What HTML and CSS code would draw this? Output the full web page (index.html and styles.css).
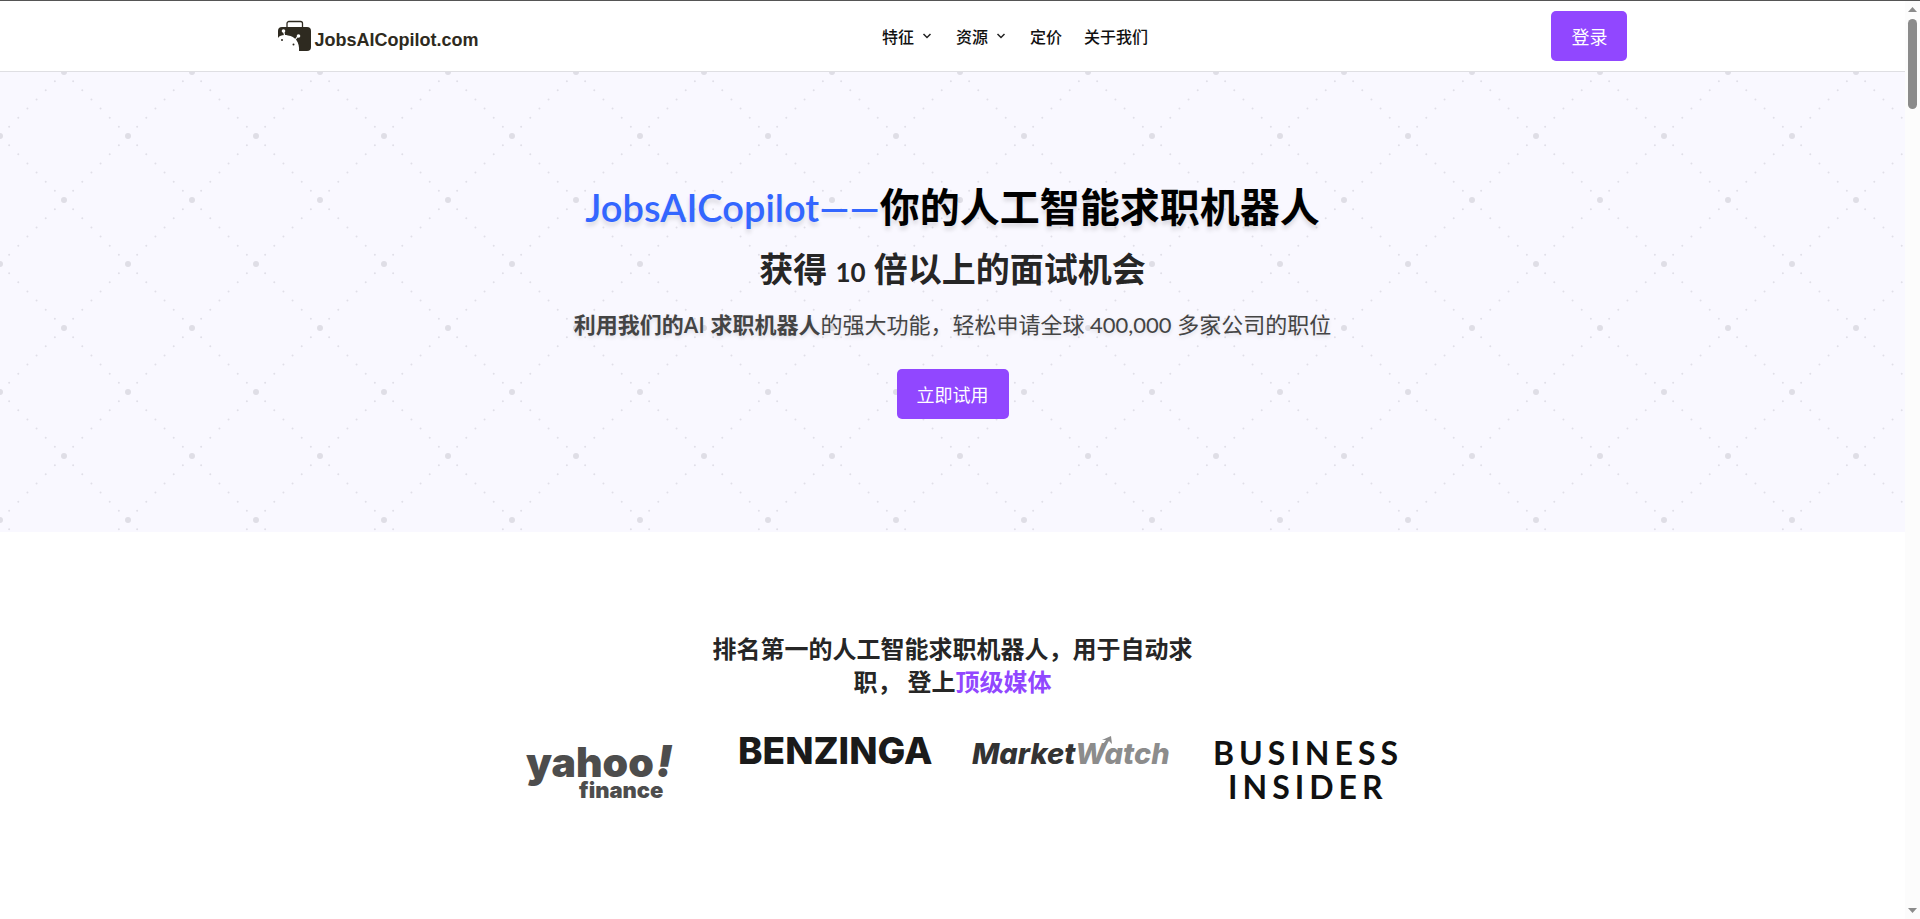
FILE: index.html
```html
<!DOCTYPE html>
<html lang="zh-CN">
<head>
    <meta charset="UTF-8">
    <meta name="viewport" content="width=device-width, initial-scale=1.0">
    <title>JobsAICopilot.com</title>
    <link rel="stylesheet" href="styles.css">
</head>
<body>
    <header class="site-header">
        <div class="header-inner">
            <a class="brand" href="#">
                <svg class="brand-icon" width="34" height="32" viewBox="0 0 34 32" aria-hidden="true">
                    <path d="M9 7V3.500a2 2 0 0 1 2-2h11.500a2 2 0 0 1 2 2V7" fill="none" stroke="#2e2a20" stroke-width="1.300"/>
                    <rect x="0" y="7" width="33" height="24" rx="4" fill="#2e2a20"/>
                    <path d="M0 18c2-3 6-3.500 10-2.500C17 16.500 22 22 21 31.500H0z" fill="#fff"/>
                    <path d="M7 17L5.500 11M17 20l3-4" stroke="#fff" stroke-width="1.200"/>
                    <circle cx="5.500" cy="11" r="1.800" fill="#fff"/>
                    <circle cx="20.500" cy="16" r="1.800" fill="#fff"/>
                    <circle cx="4" cy="20" r="1" fill="#2e2a20"/>
                    <circle cx="15.500" cy="24.500" r="1" fill="#2e2a20"/>
                </svg>
                <span class="brand-name">JobsAICopilot.com</span>
            </a>
            <nav class="main-nav">
                <a href="#">特征
                    <svg class="chevron" width="20" height="8" viewBox="0 0 20 8" aria-hidden="true"><path d="M9.500 2l3.500 3.500L16.500 2"/></svg>
                </a>
                <a href="#">资源
                    <svg class="chevron" width="20" height="8" viewBox="0 0 20 8" aria-hidden="true"><path d="M9.500 2l3.500 3.500L16.500 2"/></svg>
                </a>
                <a href="#">定价</a>
                <a href="#">关于我们</a>
            </nav>
            <button class="btn" type="button">登录</button>
        </div>
    </header>

    <main>
        <section class="hero">
            <svg class="hero-pattern" width="100%" height="100%" aria-hidden="true">
                <defs>
                    <pattern id="dots" width="128" height="128" patternUnits="userSpaceOnUse">
                        <g fill="none" stroke="#e0dfe8" stroke-width="2" stroke-linecap="round" stroke-dasharray="0 12.930">
                            <path d="M64 0L128 64"/>
                            <path d="M64 0L0 64"/>
                            <path d="M64 128L128 64"/>
                            <path d="M64 128L0 64"/>
                        </g>
                        <g fill="#dfdee6">
                            <circle cx="64" cy="0" r="3"/>
                            <circle cx="64" cy="128" r="3"/>
                            <circle cx="0" cy="64" r="3"/>
                            <circle cx="128" cy="64" r="3"/>
                        </g>
                    </pattern>
                </defs>
                <rect width="100%" height="100%" fill="url(#dots)"/>
            </svg>
            <div class="hero-content">
                <h1><span class="hero-brand">JobsAICopilot——</span>你的人工智能求职机器人</h1>
                <h2>获得 <span class="hero-number">10</span> 倍以上的面试机会</h2>
                <p><strong>利用我们的<span class="hero-ai">AI</span> 求职机器人</strong>的强大功能，轻松申请全球 400,000 多家公司的职位</p>
                <button class="btn" type="button">立即试用</button>
            </div>
        </section>

        <section class="media">
            <h3>排名第一的人工智能求职机器人，用于自动求职， 登上<span class="accent">顶级媒体</span></h3>
            <div class="media-logos">
                <svg width="196" height="72" viewBox="0 0 196 72" role="img" aria-label="yahoo! finance">
                    <g class="logo-heavy" fill="#4d4d4d" font-weight="900">
                        <text x="24" y="41" font-size="41">yahoo</text>
                        <text x="154" y="41" font-size="44" font-style="italic">!</text>
                        <text x="77" y="62" font-size="22">finance</text>
                    </g>
                </svg>
                <svg width="196" height="72" viewBox="0 0 196 72" role="img" aria-label="Benzinga">
                    <text class="logo-heavy" x="1" y="28" font-size="37" font-weight="800" fill="#1a1a1a">BENZINGA</text>
                </svg>
                <svg width="196" height="72" viewBox="0 0 196 72" role="img" aria-label="MarketWatch">
                    <text class="logo-heavy" x="0" y="28" font-size="29" font-weight="800" font-style="italic" fill="#333">Market<tspan fill="#8c8c8c">Watch</tspan></text>
                    <path d="M129 11L134 4l-4 0 9-4 1 8-3-3-5 7z" fill="#8c8c8c"/>
                </svg>
                <svg width="196" height="72" viewBox="0 0 196 72" role="img" aria-label="Business Insider">
                    <g class="logo-wide" fill="#111" font-size="32" font-weight="700">
                        <text x="6" y="29">BUSINESS</text>
                        <text x="21" y="63">INSIDER</text>
                    </g>
                </svg>
            </div>
        </section>
    </main>

    <div class="scrollbar" aria-hidden="true">
        <svg width="9" height="5" viewBox="0 0 9 5"><path d="M0 5L4.500 0 9 5z" fill="#8b8b8b"/></svg>
        <div class="scrollbar-thumb"></div>
        <svg width="9" height="5" viewBox="0 0 9 5"><path d="M0 0L4.500 5 9 0z" fill="#8b8b8b"/></svg>
    </div>
</body>
</html>
```
FILE: styles.css
```css
* {
    box-sizing: border-box;
}
body {
    margin: 0;
    padding-right: 15px;
    background: #fff;
    color: #262626;
    font-family: Lato, "Noto Sans CJK SC", sans-serif;
}
h1, h2, h3, p {
    margin: 0;
}
a {
    color: inherit;
    text-decoration: none;
}

/* header */
.site-header {
    background: #fff;
    border-bottom: 1px solid #dfdfe3;
    padding: 0 24px;
}
.site-header::before {
    content: "";
    position: absolute;
    top: 0;
    left: 0;
    width: 100%;
    height: 1px;
    background: #555;
}
.header-inner {
    display: flex;
    align-items: center;
    justify-content: space-between;
    max-width: 1350px;
    margin: 0 auto;
    padding: 11px 0 10px;
}
.brand {
    display: flex;
    align-items: center;
    gap: 3px;
    color: #2e2a20;
}
.brand-name {
    font: bold 18px/24px "Liberation Sans", sans-serif;
    padding-top: 8px;
}
.main-nav {
    display: flex;
    align-items: center;
    gap: 22px;
    font-size: 16px;
    font-weight: 500;
    color: #111;
}
.main-nav a {
    display: flex;
    align-items: center;
    font-family: "Noto Sans CJK SC", sans-serif;
}
.chevron path {
    fill: none;
    stroke: #222;
    stroke-width: 1.5;
}
.btn {
    height: 50px;
    padding: 0 20px;
    border: 0;
    border-radius: 5px;
    background: #9147ff;
    color: #fff;
    font: 400 18px/24px "Noto Sans CJK SC", sans-serif;
    cursor: pointer;
}

/* hero */
.hero {
    position: relative;
    background: #f9f8ff;
    padding: 107px 24px 113px;
}
.hero-pattern {
    position: absolute;
    top: 0;
    left: 0;
}
.hero-content {
    position: relative;
    display: flex;
    flex-direction: column;
    align-items: center;
    text-align: center;
}
.hero h1 {
    margin-bottom: 10px;
    color: #000;
    font-size: 40px;
    line-height: 56px;
    text-shadow: 0 4px 4px rgba(0, 0, 0, 0.12);
}
.hero-brand {
    color: #3366ff;
    font-size: 38px;
    font-weight: 600;
}
.hero h2 {
    margin-bottom: 12px;
    font-size: 34px;
    line-height: 48px;
}
.hero-number {
    font-size: 26px;
}
.hero p {
    margin-bottom: 28px;
    color: #444;
    font-size: 22px;
    line-height: 32px;
    text-shadow: 0 2px 4px rgba(0, 0, 0, 0.12);
}
.hero-ai {
    font-family: "Open Sans", sans-serif;
    font-weight: 600;
}

/* media */
.media {
    padding: 100px 24px;
}
.media h3 {
    max-width: 490px;
    margin: 0 auto 38px;
    font-size: 24px;
    line-height: 33px;
    text-align: center;
}
.accent {
    color: #9147ff;
}
.media-logos {
    display: grid;
    grid-template-columns: repeat(4, 1fr);
    justify-items: center;
    max-width: 940px;
    margin: 0 auto;
}
.media-logos svg {
    overflow: visible;
}
.logo-heavy {
    font-family: Inter, sans-serif;
}
.logo-wide {
    font-family: Lato, sans-serif;
    letter-spacing: 5px;
}

/* scrollbar */
.scrollbar {
    position: fixed;
    top: 1px;
    right: 0;
    bottom: 0;
    width: 15px;
    display: flex;
    flex-direction: column;
    align-items: center;
    padding: 6px 0;
    background: #fcfcfc;
}
.scrollbar-thumb {
    width: 9px;
    height: 90px;
    margin: 7px 0 auto;
    border-radius: 5px;
    background: #8b8b8b;
}
```
